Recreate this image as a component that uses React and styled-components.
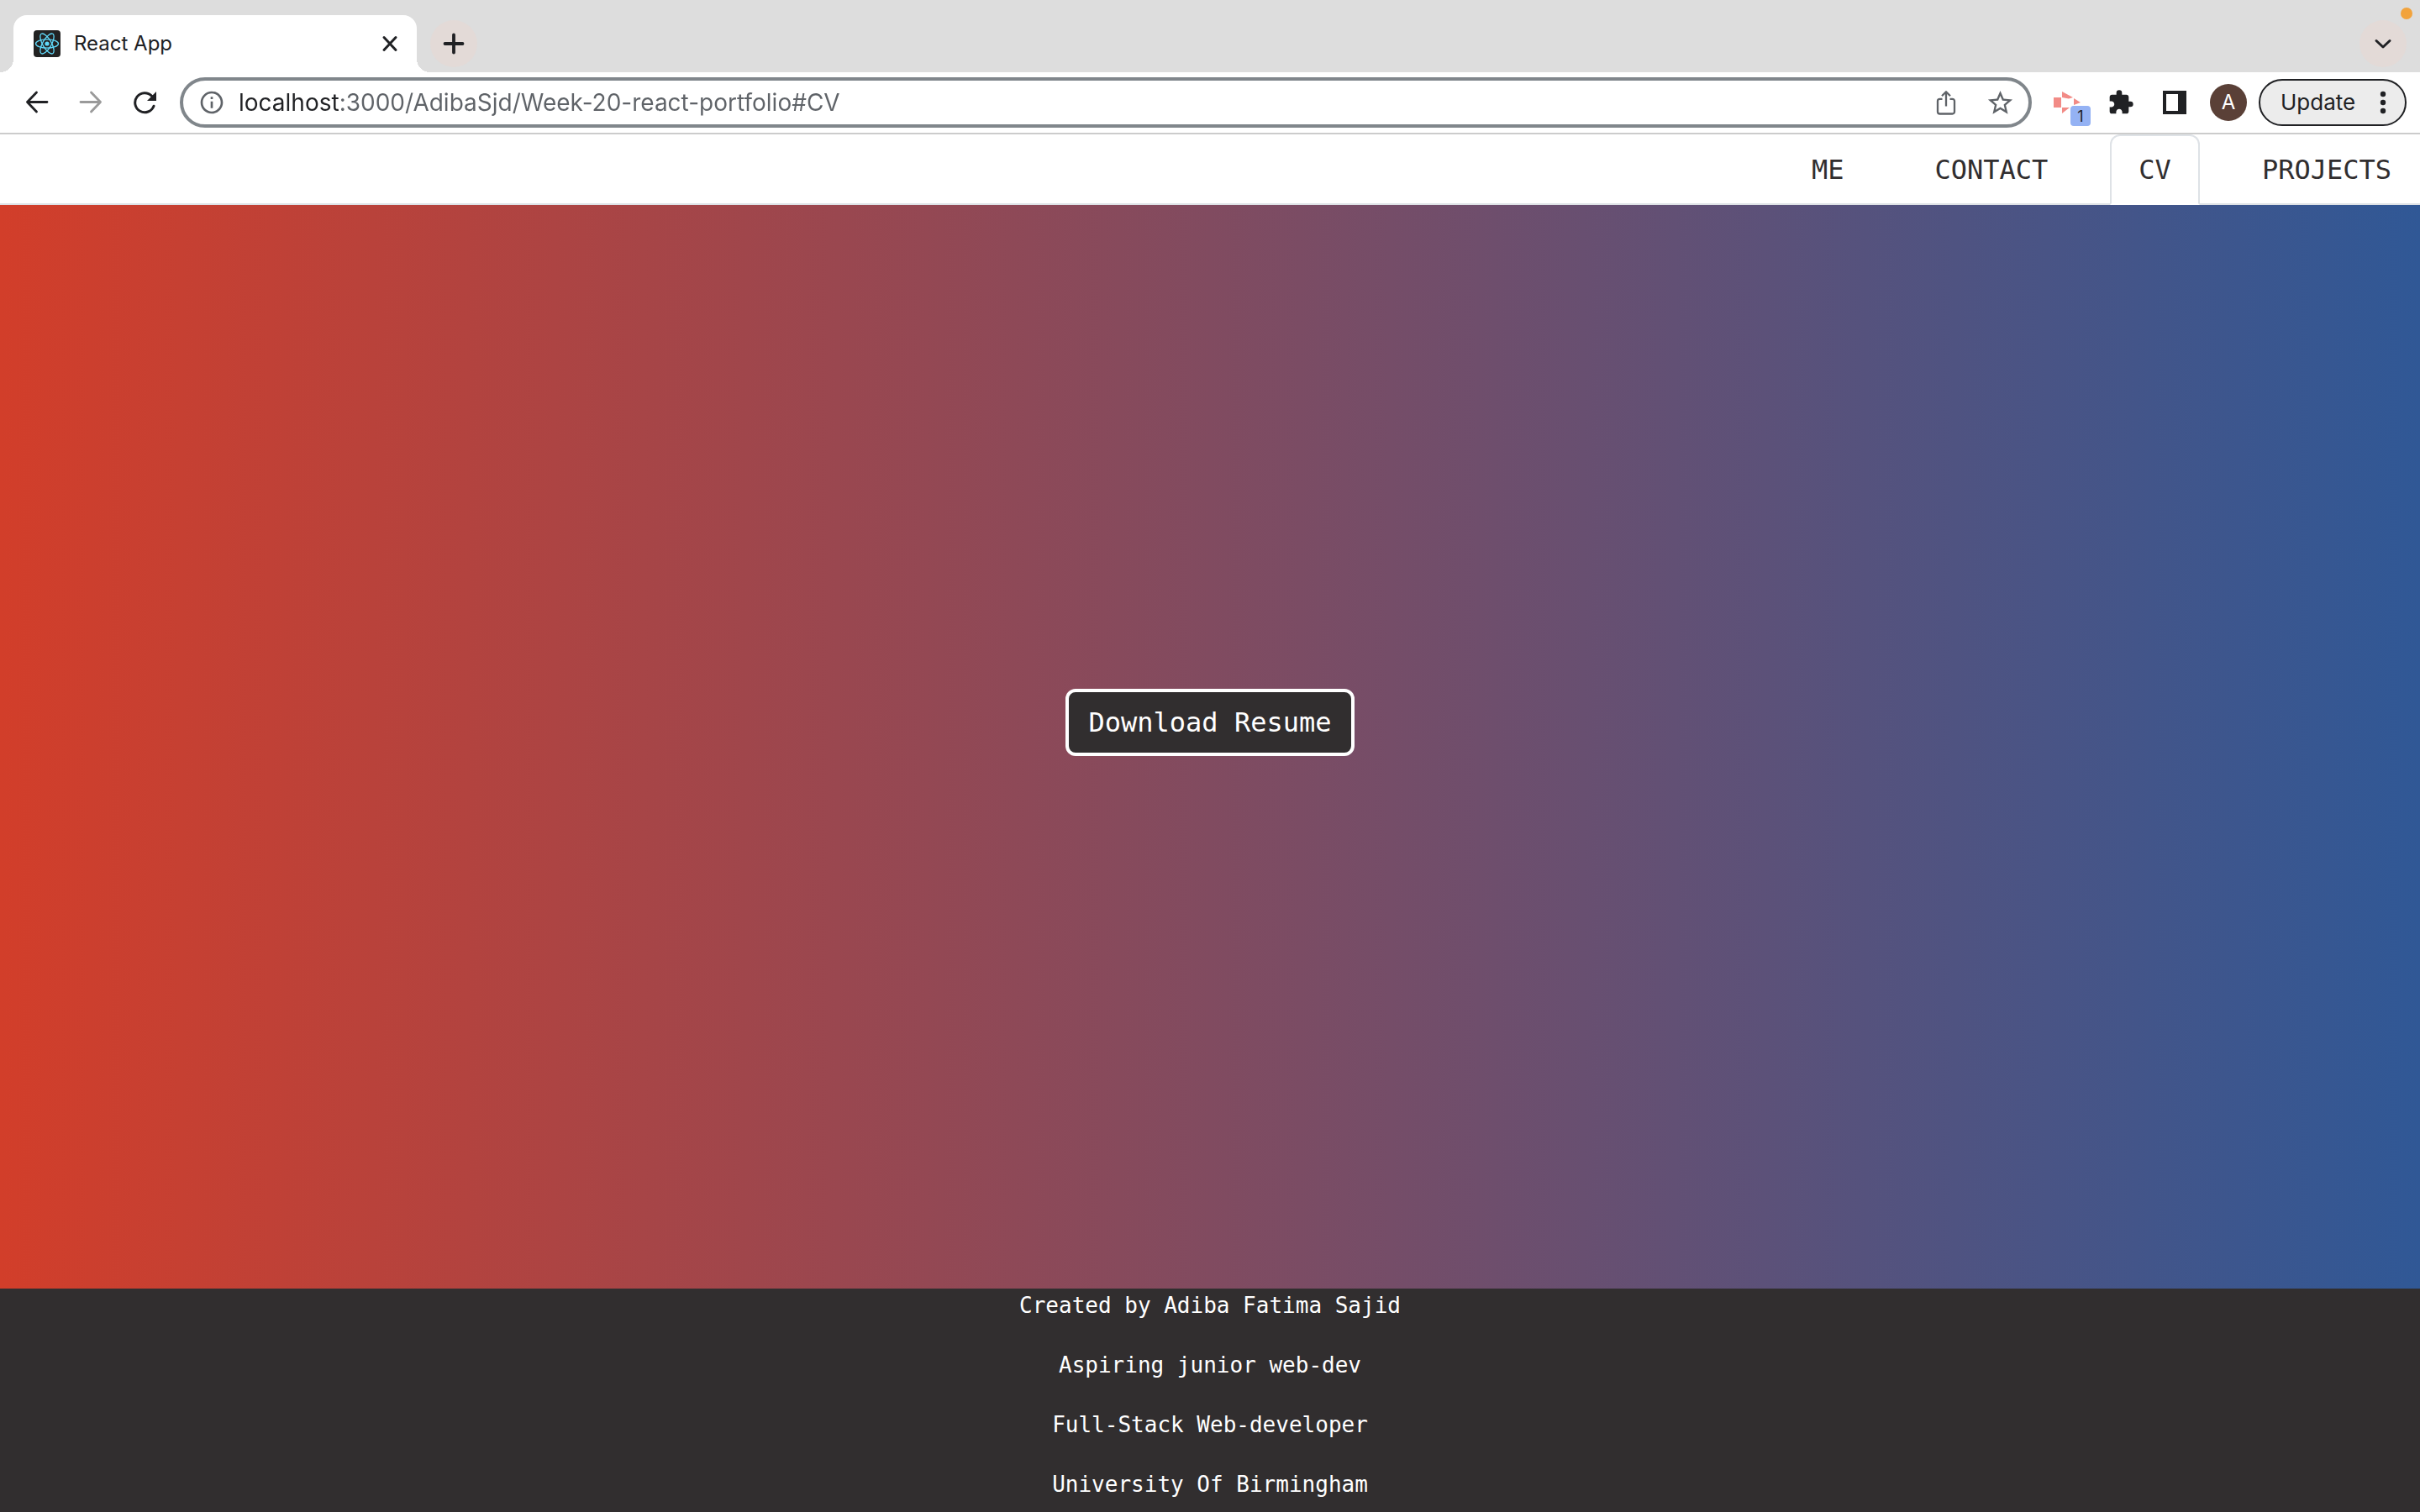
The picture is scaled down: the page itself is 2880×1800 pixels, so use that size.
import React from 'react';
import styled, { createGlobalStyle } from 'styled-components';
import { MdExtension, MdOutlineStarBorder, MdInfoOutline } from 'react-icons/md';

const UI = '"Inter", "Roboto", "Liberation Sans", sans-serif';
const MONO = '"DejaVu Sans Mono", "Liberation Mono", monospace';

const GlobalStyle = createGlobalStyle`
  *, *::before, *::after { box-sizing: border-box; }
  body { margin: 0; background: #fff; font-family: ${UI}; color: #202124; }
  button, input { font: inherit; color: inherit; }
`;

const Page = styled.div`
  display: flex;
  flex-direction: column;
  min-height: 100vh;
`;

const TabStrip = styled.header`
  position: relative;
  display: flex;
  align-items: flex-end;
  height: 86px;
  padding: 18px 16px 0;
  background: #dddddd;
`;

const BrowserTab = styled.div`
  position: relative;
  display: flex;
  align-items: center;
  gap: 16px;
  width: 480px;
  height: 68px;
  padding: 0 20px 0 24px;
  border-radius: 16px 16px 0 0;
  background: #fff;
  &::before, &::after {
    content: '';
    position: absolute;
    bottom: 0;
    width: 16px;
    height: 16px;
  }
  &::before { left: -16px; background: radial-gradient(circle at 0 0, transparent 16px, #fff 16px); }
  &::after { right: -16px; background: radial-gradient(circle at 100% 0, transparent 16px, #fff 16px); }
`;

const TabTitle = styled.span`
  flex: 1;
  font-size: 24px;
  line-height: 32px;
`;

const IconButton = styled.button`
  display: flex;
  align-items: center;
  justify-content: center;
  flex: none;
  width: ${(p) => p.$size || 24}px;
  height: ${(p) => p.$size || 24}px;
  padding: 0;
  border: 0;
  border-radius: 50%;
  background: ${(p) => (p.$tinted ? '#e3dad7' : 'transparent')};
  color: ${(p) => p.$color || '#202124'};
  svg { flex: none; }
`;

const StripActions = styled.div`
  display: flex;
  flex: 1;
  justify-content: space-between;
  align-self: flex-start;
  padding: 6px 0 0 16px;
`;

const RecordingDot = styled.span`
  position: absolute;
  top: 9px;
  right: 9px;
  width: 14px;
  height: 14px;
  border-radius: 50%;
  background: #f2a33c;
`;

const Toolbar = styled.div`
  display: flex;
  align-items: center;
  height: 74px;
  padding: 0 16px 0 12px;
  border-bottom: 2px solid #cccccc;
  background: #fff;
`;

const NavButtons = styled.div`
  display: flex;
  margin-right: 10px;
`;

const Omnibox = styled.form`
  display: flex;
  flex: 1;
  align-items: center;
  height: 60px;
  padding: 0 18px;
  border: 4px solid #80868b;
  border-radius: 30px;
  color: #5f6368;
`;

const Address = styled.input`
  flex: 1;
  min-width: 0;
  height: 40px;
  margin-left: 16px;
  padding: 0;
  border: 0;
  outline: 0;
  font-size: 28px;
  line-height: 40px;
  background: linear-gradient(90deg, #202124 0 122px, #5f6368 122px);
  background-clip: text;
  -webkit-text-fill-color: transparent;
`;

const OmniActions = styled.div`
  display: flex;
  gap: 32px;
`;

const Tools = styled.div`
  display: flex;
  align-items: center;
  gap: 32px;
  margin: 0 26px;
`;

const ExtensionButton = styled(IconButton)`
  position: relative;
  border-radius: 0;
`;

const Badge = styled.span`
  position: absolute;
  left: 20px;
  top: 20px;
  width: 24px;
  height: 24px;
  border-radius: 4px;
  background: #94b2f4;
  color: #202124;
  font-size: 18px;
  line-height: 26px;
  text-align: center;
`;

const Avatar = styled.button`
  width: 44px;
  height: 44px;
  padding: 0;
  border: 0;
  border-radius: 50%;
  background: #5a4037;
  color: #fff;
  font-size: 24px;
  line-height: 44px;
  text-align: center;
`;

const Update = styled.button`
  display: flex;
  align-items: center;
  justify-content: space-between;
  width: 176px;
  height: 56px;
  margin-left: 14px;
  padding: 0 20px 0 24px;
  border: 2px solid #202124;
  border-radius: 28px;
  background: #ececec;
  font-size: 26px;
  line-height: 32px;
`;

const SiteNav = styled.nav`
  display: flex;
  justify-content: flex-end;
  gap: 40px;
  height: 84px;
  border-bottom: 2px solid #dee2e6;
  background: #fff;
`;

const NavLink = styled.a`
  height: 84px;
  padding: 16px 32px;
  border: 2px solid transparent;
  border-color: ${(p) => (p.$active ? '#dee2e6 #dee2e6 #fff' : 'transparent')};
  border-radius: 12px 12px 0 0;
  color: #312e2f;
  font-family: ${MONO};
  font-size: 32px;
  line-height: 48px;
  text-decoration: none;
`;

const Hero = styled.main`
  display: flex;
  flex: 1;
  align-items: center;
  justify-content: center;
  padding-bottom: 58px;
  background: linear-gradient(90deg, #d23e2a, #305896);
`;

const Download = styled.button`
  padding: 12px 24px;
  border: 4px solid #fff;
  border-radius: 12px;
  background: #312e2f;
  color: #fff;
  font-family: ${MONO};
  font-size: 32px;
  line-height: 48px;
`;

const Footer = styled.footer`
  display: flex;
  flex-direction: column;
  align-items: center;
  gap: 31px;
  padding-bottom: 13px;
  background: #312e2f;
`;

const FooterLine = styled.p`
  margin: 0;
  color: #fff;
  font-family: ${MONO};
  font-size: 26px;
  line-height: 40px;
`;

const stroke = (w) => ({ fill: 'none', stroke: 'currentColor', strokeWidth: w, strokeLinecap: 'round', strokeLinejoin: 'round' });

const ReactIcon = () => (
  <svg width="32" height="32" viewBox="0 0 32 32" aria-hidden="true">
    <rect width="32" height="32" rx="4" fill="#222" />
    <g fill="none" stroke="#61dafb" strokeWidth="1.3">
      <ellipse cx="16" cy="16" rx="13.5" ry="5.2" />
      <ellipse cx="16" cy="16" rx="13.5" ry="5.2" transform="rotate(60 16 16)" />
      <ellipse cx="16" cy="16" rx="13.5" ry="5.2" transform="rotate(120 16 16)" />
    </g>
    <circle cx="16" cy="16" r="2.6" fill="#61dafb" />
  </svg>
);
const CloseIcon = () => <svg width="24" height="24" viewBox="0 0 24 24"><path d="M5 4.500L19 19.500M19 4.500L5 19.500" {...stroke(3)} /></svg>;
const PlusIcon = () => <svg width="28" height="28" viewBox="0 0 28 28"><path d="M14 3.500V24.500M3.500 14H24.500" {...stroke(3.8)} /></svg>;
const ChevronIcon = () => <svg width="24" height="24" viewBox="0 0 24 24"><path d="M4 8.5L12 16L20 8.5" {...stroke(3)} /></svg>;
const BackIcon = () => <svg width="28" height="28" viewBox="0 0 28 28"><path d="M26 13.5H2.5M13.5 2L2.5 13.5L13.5 25" {...stroke(2.8)} /></svg>;
const ForwardIcon = () => <svg width="28" height="28" viewBox="0 0 28 28"><path d="M2 13.5H25.5M14.5 2L25.5 13.5L14.5 25" {...stroke(2.8)} /></svg>;
const ReloadIcon = () => (
  <svg width="28" height="28" viewBox="0 0 28 28">
    <path d="M22.6 6.3A11.5 11.5 0 1 0 25 18.2" {...stroke(3)} />
    <path d="M28 1V12H17Z" fill="currentColor" />
  </svg>
);
const ShareIcon = () => (
  <svg width="32" height="32" viewBox="0 0 32 32">
    <path d="M11.5 11.800H8.500A2.500 2.500 0 0 0 6 14.300V27A2.500 2.500 0 0 0 8.500 29.500H23.500A2.500 2.500 0 0 0 26 27V14.300A2.500 2.500 0 0 0 23.500 11.800H20.500M16 20.500V3.500M11 8.200L16 3.200L21 8.200" {...stroke(2.3)} strokeLinecap="butt" />
  </svg>
);
const RecorderIcon = () => (
  <svg width="32" height="32" viewBox="0 0 32 32">
    <path d="M0 10H9V22H0ZM10 3L23 10L18 11.500L10 10ZM10 22H19L10 29ZM24 11L32 16L24 19Z" fill="#f28b86" />
  </svg>
);
const PanelIcon = () => <svg width="28" height="28" viewBox="0 0 28 28"><path fillRule="evenodd" d="M0 0H28V28H0ZM4 4V24H18V4Z" fill="currentColor" /></svg>;
const DotsIcon = () => (
  <svg width="12" height="28" viewBox="0 0 12 28">
    <g fill="currentColor"><circle cx="6" cy="4" r="3.200" /><circle cx="6" cy="14" r="3.200" /><circle cx="6" cy="24" r="3.200" /></g>
  </svg>
);

const links = [
  { label: 'ME', href: '#ME' },
  { label: 'CONTACT', href: '#CONTACT' },
  { label: 'CV', href: '#CV', active: true },
  { label: 'PROJECTS', href: '#PROJECTS' },
];

const credits = ['Created by Adiba Fatima Sajid', 'Aspiring junior web-dev', 'Full-Stack Web-developer', 'University Of Birmingham'];

export default function App() {
  return (
    <Page>
      <GlobalStyle />
      <TabStrip>
        <BrowserTab>
          <ReactIcon />
          <TabTitle>React App</TabTitle>
          <IconButton aria-label="Close tab"><CloseIcon /></IconButton>
        </BrowserTab>
        <StripActions>
          <IconButton $size={56} $tinted aria-label="New tab"><PlusIcon /></IconButton>
          <IconButton $size={56} $tinted aria-label="Search tabs"><ChevronIcon /></IconButton>
        </StripActions>
        <RecordingDot />
      </TabStrip>
      <Toolbar>
        <NavButtons>
          <IconButton $size={64} aria-label="Back"><BackIcon /></IconButton>
          <IconButton $size={64} $color="#9a9a9a" aria-label="Forward"><ForwardIcon /></IconButton>
          <IconButton $size={64} aria-label="Reload"><ReloadIcon /></IconButton>
        </NavButtons>
        <Omnibox>
          <IconButton type="button" $size={32} $color="#5f6368" aria-label="Site information"><MdInfoOutline size={32} /></IconButton>
          <Address aria-label="Address" defaultValue="localhost:3000/AdibaSjd/Week-20-react-portfolio#CV" />
          <OmniActions>
            <IconButton type="button" $size={32} $color="#5f6368" aria-label="Share"><ShareIcon /></IconButton>
            <IconButton type="button" $size={32} $color="#5f6368" aria-label="Bookmark"><MdOutlineStarBorder size={35} /></IconButton>
          </OmniActions>
        </Omnibox>
        <Tools>
          <ExtensionButton $size={32} aria-label="Recorder"><RecorderIcon /><Badge>1</Badge></ExtensionButton>
          <IconButton $size={32} aria-label="Extensions"><MdExtension size={32} /></IconButton>
          <IconButton $size={32} aria-label="Side panel"><PanelIcon /></IconButton>
        </Tools>
        <Avatar aria-label="Profile">A</Avatar>
        <Update>Update<DotsIcon /></Update>
      </Toolbar>
      <SiteNav>
        {links.map((l) => (
          <NavLink key={l.label} href={l.href} $active={l.active}>{l.label}</NavLink>
        ))}
      </SiteNav>
      <Hero><Download>Download Resume</Download></Hero>
      <Footer>
        {credits.map((c) => <FooterLine key={c}>{c}</FooterLine>)}
      </Footer>
    </Page>
  );
}
